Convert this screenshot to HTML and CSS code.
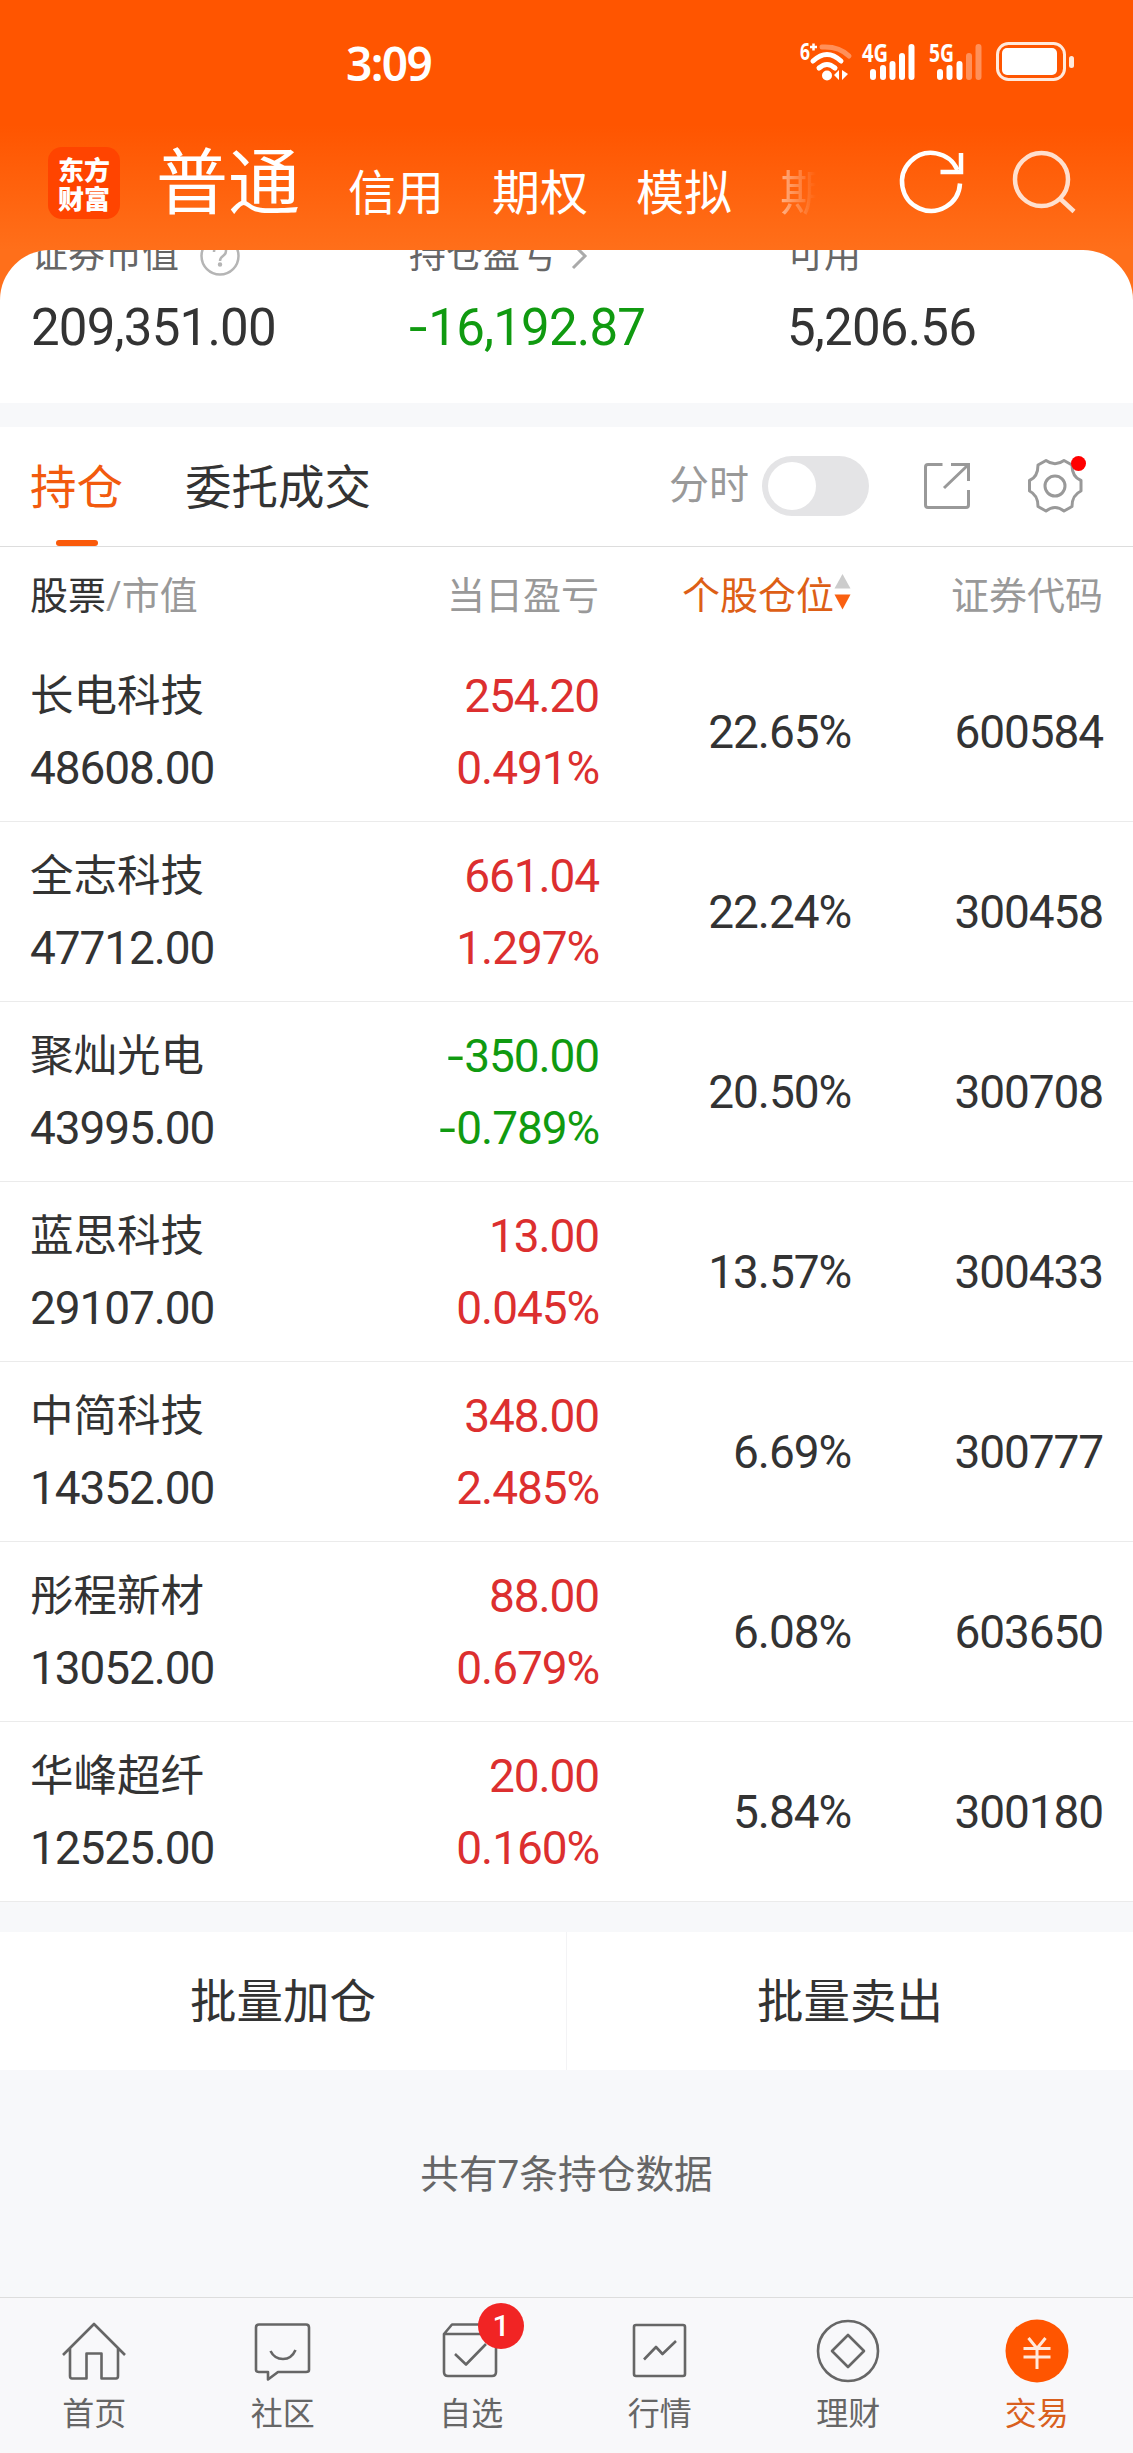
FILE: index.html
```html
<!DOCTYPE html>
<html lang="zh-CN">
<head>
    <meta charset="UTF-8">
    <meta name="viewport" content="width=device-width, initial-scale=1.0">
    <title>持仓 - 东方财富</title>
    <link rel="stylesheet" href="styles.css">
</head>
<body>
    <header class="header">
        <div class="status-bar">
            <div class="time">3:09</div>
            <svg class="status-icons" width="280" height="44" viewBox="0 0 280 44" fill="none">
                <!-- wifi -->
                <text class="net-label" x="0" y="20" font-size="23" textLength="10" lengthAdjust="spacingAndGlyphs">6</text>
                <path d="M10 7h7M13.500 3.500v7" stroke="#fff" stroke-width="2.500"/>
                <path d="M22 7q17-1 27 9" stroke="#fff" stroke-opacity=".35" stroke-width="5" stroke-linecap="round"/>
                <path d="M13 21q14-13 28 0M19 28q8-7 16 0" stroke="#fff" stroke-width="5" stroke-linecap="round"/>
                <circle cx="27" cy="35.500" r="5" fill="#fff"/>
                <path d="M39 30v10l-5-5zM42 30v10l6-6z" fill="#fff"/>
                <!-- 4G -->
                <text class="net-label" x="62" y="22" font-size="25" textLength="26" lengthAdjust="spacingAndGlyphs">4G</text>
                <path d="M73 32v5M83 28v9M92.500 24v13M102 16v21M111.500 7v30" stroke="#fff" stroke-width="6" stroke-linecap="round"/>
                <!-- 5G -->
                <text class="net-label" x="129" y="22" font-size="25" textLength="25" lengthAdjust="spacingAndGlyphs">5G</text>
                <path d="M140 32v5M149.500 28v9M159.500 24v13" stroke="#fff" stroke-width="6" stroke-linecap="round"/>
                <path d="M169 16v21M178.500 7v30" stroke="#fff" stroke-opacity=".35" stroke-width="6" stroke-linecap="round"/>
                <!-- battery -->
                <rect x="197.500" y="3.500" width="67" height="36" rx="11" stroke="#ffe9dc" stroke-width="3"/>
                <rect x="202" y="8" width="55" height="27" rx="5" fill="#fff"/>
                <rect x="269" y="16" width="5" height="12" rx="2.500" fill="#ffe9dc"/>
            </svg>
        </div>
        <nav class="account-nav">
            <div class="logo"><span>东方</span><span>财富</span></div>
            <div class="account-tabs">
                <span class="account-tab active">普通</span>
                <span class="account-tab">信用</span>
                <span class="account-tab">期权</span>
                <span class="account-tab">模拟</span>
                <span class="account-tab faded">期</span>
            </div>
            <svg class="nav-icon" width="68" height="68" viewBox="0 0 68 68" fill="none" stroke="#fff" stroke-width="4.500">
                <path d="M60 36.500A29 29 0 1 1 57.500 23"/>
                <path d="M61 6v19H40.500"/>
            </svg>
            <svg class="nav-icon search" width="68" height="68" viewBox="0 0 68 68" fill="none" stroke="#fff" stroke-width="4.500">
                <circle cx="31.500" cy="32.500" r="26.500"/>
                <path d="M50 51.500l14 13"/>
            </svg>
        </nav>
    </header>

    <section class="summary">
        <div class="summary-item">
            <div class="summary-label">证券市值
                <svg class="help" width="42" height="42" viewBox="0 0 42 42" fill="none" stroke="#b5b5b5" stroke-width="2.500">
                    <circle cx="21" cy="21" r="18.500"/>
                    <path d="M15 17q0-6 6-6t6 5q0 3-3 5t-3 5"/>
                    <circle cx="21" cy="29.500" r="1" fill="#b5b5b5"/>
                </svg>
            </div>
            <div class="summary-value">209,351.00</div>
        </div>
        <div class="summary-item">
            <div class="summary-label">持仓盈亏
                <svg class="chevron" width="18" height="30" viewBox="0 0 18 30" fill="none" stroke="#aaa" stroke-width="3">
                    <path d="M2 3l12 12L2 27"/>
                </svg>
            </div>
            <div class="summary-value down"><span class="minus">-</span>16,192.87</div>
        </div>
        <div class="summary-item">
            <div class="summary-label">可用</div>
            <div class="summary-value">5,206.56</div>
        </div>
    </section>

    <div class="toolbar">
        <div class="tab active">持仓</div>
        <div class="tab">委托成交</div>
        <div class="tools">
            <span class="switch-label">分时</span>
            <span class="switch"></span>
            <svg class="share" width="48" height="50" viewBox="0 0 48 50" fill="none" stroke="#999" stroke-width="3">
                <path d="M19.500 3.500H5q-2.500 0-2.500 2.500v38q0 2.500 2.500 2.500h38q2.500 0 2.500-2.500V29"/>
                <path d="M28 3.500h17.500V20M44.500 4.500L21 27"/>
            </svg>
            <div class="settings">
                <svg width="56" height="56" viewBox="0 0 56 56" fill="none" stroke="#999" stroke-width="3" stroke-linejoin="round">
                    <path d="M19 2.500Q28 9 37 2.500L45 7Q45 19 54 22.500V33Q45 37 45 48.500L37 53Q28 46 19 53L11 48.500Q11 37 2.500 33V22.500Q11 19 11 7Z"/>
                    <circle cx="28" cy="28" r="10"/>
                </svg>
                <span class="dot"></span>
            </div>
        </div>
    </div>

    <main class="holdings">
        <div class="row head">
            <div class="name"><b>股票</b>/市值</div>
            <div class="profit">当日盈亏</div>
            <div class="ratio sorted">个股仓位<svg width="17" height="36" viewBox="0 0 17 36"><path d="M8.500 0l8 14.500H.5z" fill="#ccc"/><path d="M.5 20.500h16l-8 15z" fill="#fa6010"/></svg></div>
            <div class="code">证券代码</div>
        </div>
        <div class="row">
            <div class="name"><p>长电科技</p><p class="num">48608.00</p></div>
            <div class="profit up"><p>254.20</p><p>0.491%</p></div>
            <div class="ratio">22.65%</div>
            <div class="code">600584</div>
        </div>
        <div class="row">
            <div class="name"><p>全志科技</p><p class="num">47712.00</p></div>
            <div class="profit up"><p>661.04</p><p>1.297%</p></div>
            <div class="ratio">22.24%</div>
            <div class="code">300458</div>
        </div>
        <div class="row">
            <div class="name"><p>聚灿光电</p><p class="num">43995.00</p></div>
            <div class="profit down"><p><span class="minus">-</span>350.00</p><p><span class="minus">-</span>0.789%</p></div>
            <div class="ratio">20.50%</div>
            <div class="code">300708</div>
        </div>
        <div class="row">
            <div class="name"><p>蓝思科技</p><p class="num">29107.00</p></div>
            <div class="profit up"><p>13.00</p><p>0.045%</p></div>
            <div class="ratio">13.57%</div>
            <div class="code">300433</div>
        </div>
        <div class="row">
            <div class="name"><p>中简科技</p><p class="num">14352.00</p></div>
            <div class="profit up"><p>348.00</p><p>2.485%</p></div>
            <div class="ratio">6.69%</div>
            <div class="code">300777</div>
        </div>
        <div class="row">
            <div class="name"><p>彤程新材</p><p class="num">13052.00</p></div>
            <div class="profit up"><p>88.00</p><p>0.679%</p></div>
            <div class="ratio">6.08%</div>
            <div class="code">603650</div>
        </div>
        <div class="row">
            <div class="name"><p>华峰超纤</p><p class="num">12525.00</p></div>
            <div class="profit up"><p>20.00</p><p>0.160%</p></div>
            <div class="ratio">5.84%</div>
            <div class="code">300180</div>
        </div>
    </main>

    <div class="batch">
        <div class="batch-btn">批量加仓</div>
        <div class="batch-btn">批量卖出</div>
    </div>
    <p class="total">共有7条持仓数据</p>

    <footer class="tabbar">
        <div class="tabbar-item">
            <svg width="64" height="64" viewBox="0 0 64 64">
                <path d="M1 36L32 5l31 31M8 29v28q0 2.500 2 2.500h14.500v-25h15v25H54q2 0 2-2.500V29"/>
            </svg>
            <span>首页</span>
        </div>
        <div class="tabbar-item">
            <svg width="64" height="64" viewBox="0 0 64 64">
                <path d="M8 5.500h47q3 0 3 3V51q0 2-3 2H27l-10 7.500V53H8q-3 0-3-2V8.500q0-3 3-3z"/>
                <path d="M19.500 32q4 8 12.500 8t12.500-9"/>
            </svg>
            <span>社区</span>
        </div>
        <div class="tabbar-item">
            <svg width="64" height="64" viewBox="0 0 64 64">
                <path d="M5 15v38q0 4 4 4h44q4 0 4-4V15zM5 15l8-9.500h40L57 15"/>
                <path d="M16 35l11 10.500L47 25"/>
            </svg>
            <span class="badge">1</span>
            <span>自选</span>
        </div>
        <div class="tabbar-item">
            <svg width="64" height="64" viewBox="0 0 64 64">
                <rect x="6" y="6" width="51" height="51" rx="2"/>
                <path d="M16 40.500l12-12.500 6.500 7L48 22"/>
            </svg>
            <span>行情</span>
        </div>
        <div class="tabbar-item">
            <svg width="64" height="64" viewBox="0 0 64 64">
                <circle cx="32" cy="32" r="30"/>
                <path d="M32 16L48 32 32 48 16 32z"/>
            </svg>
            <span>理财</span>
        </div>
        <div class="tabbar-item current">
            <svg width="64" height="64" viewBox="0 0 64 64">
                <circle class="coin" cx="32" cy="32" r="31.500"/>
                <path class="yuan" d="M23.500 19L32 29.500 40.500 19M18.500 29.500h27M18.500 38h27M32 29.500V50"/>
            </svg>
            <span>交易</span>
        </div>
    </footer>
</body>
</html>
```
FILE: styles.css
```css
* {
    box-sizing: border-box;
    margin: 0;
    padding: 0;
}

body {
    width: 1133px;
    height: 2453px;
    display: flex;
    flex-direction: column;
    background: #f7f8fa;
    color: #333;
    font-family: Roboto, "Noto Sans CJK SC", sans-serif;
    overflow: hidden;
}

svg {
    display: block;
    flex: none;
    overflow: visible;
}

/* Header */
.header {
    height: 250px;
    flex: none;
    background: linear-gradient(#ff5500 0, #ff5500 125px, #ff6f1a 250px);
    color: #fff;
}

.status-bar {
    height: 125px;
    display: flex;
    align-items: flex-start;
    justify-content: space-between;
    padding: 40px 53px 0 346px;
}

.time {
    font-family: "Noto Sans", sans-serif;
    font-size: 46px;
    font-weight: 600;
    line-height: 46px;
    letter-spacing: -1.6px;
}

.net-label {
    font-family: "Open Sans", sans-serif;
    font-weight: 700;
    fill: #fff;
}

.account-nav {
    height: 125px;
    display: flex;
    align-items: flex-start;
    padding: 22px 55px 0 48px;
}

.logo {
    width: 72px;
    height: 72px;
    border-radius: 14px;
    background: #ff4400;
    display: flex;
    flex-direction: column;
    align-items: center;
    justify-content: center;
    font-family: "Noto Sans CJK SC", sans-serif;
    font-size: 26px;
    font-weight: 900;
    line-height: 29px;
}

.account-tabs {
    flex: 1;
    display: flex;
    align-items: baseline;
    gap: 48px;
    margin-left: 36px;
    line-height: 74px;
}

.account-tab {
    position: relative;
    top: 2px;
    font-size: 48px;
}

.account-tab.active {
    top: 0;
    font-size: 72px;
}

.account-tab.faded {
    width: 36px;
    overflow: hidden;
    color: transparent;
    background: linear-gradient(90deg, rgba(255, 255, 255, 0.5), rgba(255, 255, 255, 0));
    background-clip: text;
}

.nav-icon {
    margin-left: 42px;
}

.nav-icon.search {
    opacity: 0.8;
}

/* Account summary */
.summary {
    height: 153px;
    flex: none;
    display: flex;
    background: #fff;
    border-radius: 50px 50px 0 0;
    box-shadow: 0 -50px 0 #ff6f1a;
    clip-path: inset(0);
    padding-left: 31px;
    overflow: hidden;
}

.summary-item {
    width: 378px;
    flex: none;
}

.summary-label {
    height: 36px;
    margin-top: -12px;
    display: flex;
    align-items: center;
    font-size: 37px;
    line-height: 36px;
    color: #666;
}

.help {
    margin-left: 20px;
}

.chevron {
    margin-left: 14px;
}

.summary-value {
    margin-top: 24px;
    font-size: 51px;
    line-height: 60px;
    letter-spacing: -0.8px;
}

.minus {
    display: inline-block;
    transform: scaleX(1.3);
    margin: 0 4px 0 2px;
}

.up {
    color: #dc2f2f;
}

.down {
    color: #109a10;
}

/* Holdings toolbar */
.toolbar {
    height: 120px;
    flex: none;
    margin-top: 24px;
    padding: 0 50px 0 30px;
    display: flex;
    align-items: center;
    background: #fff;
    border-bottom: 1px solid #ddd;
}

.tab {
    position: relative;
    height: 119px;
    margin-right: 62px;
    font-size: 46.5px;
    line-height: 122px;
}

.tab.active {
    color: #f25a0e;
}

.tab.active::after {
    content: "";
    position: absolute;
    left: 26px;
    bottom: 0;
    width: 42px;
    height: 6px;
    border-radius: 3px;
    background: #fa5a0a;
}

.tools {
    margin-left: auto;
    padding-bottom: 1px;
    display: flex;
    align-items: center;
}

.switch-label {
    font-size: 40px;
    line-height: 56px;
    color: #999;
}

.switch {
    width: 107px;
    height: 60px;
    margin-left: 13px;
    padding: 6px;
    border-radius: 30px;
    background: #e4e4e6;
}

.switch::before {
    content: "";
    display: block;
    width: 48px;
    height: 48px;
    border-radius: 50%;
    background: #fff;
}

.share {
    margin: 0 56px 0 54px;
}

.settings {
    position: relative;
}

.dot {
    position: absolute;
    top: -2px;
    right: -3px;
    width: 15px;
    height: 15px;
    border-radius: 50%;
    background: #f00;
}

/* Holdings table */
.holdings {
    background: #fff;
}

.row {
    height: 180px;
    padding: 0 30px;
    display: grid;
    grid-template-columns: 269px 300px 252px 252px;
    align-items: center;
    border-bottom: 1px solid #ebebeb;
    font-size: 46px;
    letter-spacing: -1.1px;
}

.row p {
    line-height: 72px;
}

.name p:first-child {
    padding-top: 1px;
    margin-bottom: -1px;
    font-size: 43.5px;
    letter-spacing: 0;
}

.profit,
.ratio,
.code {
    text-align: right;
}

.row.head {
    height: 95px;
    padding-bottom: 5px;
    border-bottom: 0;
    font-size: 38px;
    letter-spacing: 0;
    color: #999;
}

.head b {
    font-weight: 400;
    color: #333;
}

.sorted {
    display: flex;
    align-items: center;
    justify-content: flex-end;
    color: #dd5f16;
}

/* Batch actions */
.batch {
    height: 138px;
    flex: none;
    margin-top: 30px;
    display: flex;
    background: #fff;
}

.batch-btn {
    flex: 1;
    text-align: center;
    font-size: 46.5px;
    line-height: 140px;
}

.batch-btn + .batch-btn {
    border-left: 1px solid #f3f3f5;
}

.total {
    margin-top: 75px;
    text-align: center;
    font-size: 38.7px;
    line-height: 60px;
    color: #666;
}

/* Bottom tab bar */
.tabbar {
    height: 156px;
    flex: none;
    margin-top: auto;
    padding-top: 21px;
    padding-right: 2px;
    display: flex;
    background: #f8f8fa;
    border-top: 1px solid #ddd;
}

.tabbar-item {
    flex: 1;
    position: relative;
    display: flex;
    flex-direction: column;
    align-items: center;
    gap: 11px;
    font-size: 32px;
    line-height: 40px;
    color: #666;
}

.tabbar-item svg {
    fill: none;
    stroke: #666;
    stroke-width: 2.6;
    stroke-linejoin: round;
}

.tabbar-item.current {
    color: #d9601e;
}

.tabbar-item .coin {
    fill: #ff5500;
    stroke: none;
}

.tabbar-item .yuan {
    stroke: #ffe9dc;
    stroke-width: 3;
}

.badge {
    position: absolute;
    left: 101px;
    top: -16px;
    width: 46px;
    height: 46px;
    border-radius: 50%;
    background: #f12424;
    color: #fff;
    font-weight: 500;
    font-size: 30px;
    line-height: 46px;
    text-align: center;
}
```
